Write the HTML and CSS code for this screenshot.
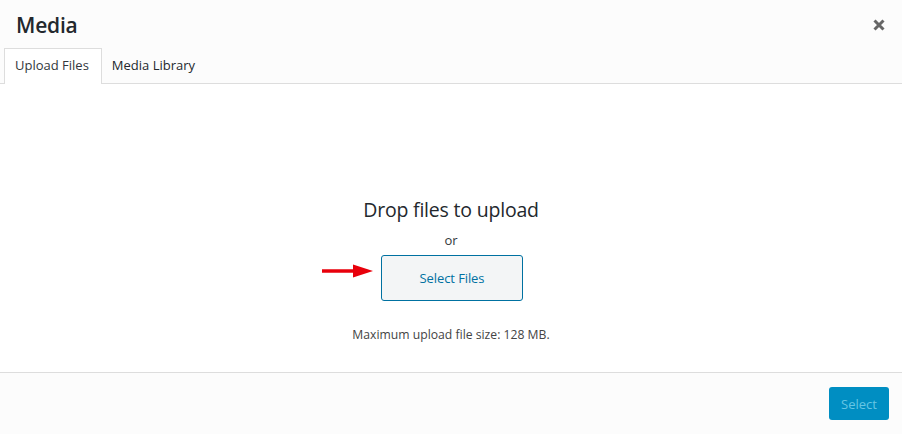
FILE: index.html
```html
<!DOCTYPE html>
<html>
<head>
<meta charset="utf-8">
<link rel="stylesheet" href="styles.css">
</head>
<body>
<div class="modal">
  <div class="header">
    <h1 class="title">Media</h1>
    <button class="close" aria-label="Close">
      <svg width="12" height="12" viewBox="0 0 12 12"><path d="M1.5 1.5 L10.5 10.5 M10.5 1.5 L1.5 10.5" stroke="#666" stroke-width="3" stroke-linecap="butt"/></svg>
    </button>
  </div>
  <div class="tabs">
    <div class="tab active">Upload Files</div>
    <div class="tab">Media Library</div>
  </div>
  <div class="content">
    <div class="drop">Drop files to upload</div>
    <div class="or">or</div>
    <div class="btn-wrap">
      <svg class="arrow" width="52" height="14" viewBox="0 0 52 14"><path d="M0 7 H32" stroke="#e8000b" stroke-width="3.5"/><path d="M31 0.5 L51 7 L31 13.5 Z" fill="#e8000b"/></svg>
      <button class="select-files">Select Files</button>
    </div>
    <div class="max">Maximum upload file size: 128 MB.</div>
  </div>
  <div class="footer">
    <button class="select">Select</button>
  </div>
</div>
</body>
</html>
```
FILE: styles.css
```css
* { box-sizing: border-box; }
html, body { margin: 0; padding: 0; }
body {
  width: 902px;
  height: 434px;
  overflow: hidden;
  font-family: "Open Sans", "Noto Sans", sans-serif;
  color: #23282d;
  background: #fff;
}
.modal { display: flex; flex-direction: column; height: 434px; }
.header {
  height: 48px;
  background: #fcfcfc;
  display: flex;
  justify-content: space-between;
  padding: 0 16px;
}
.title {
  margin: 0;
  font-size: 21px;
  font-weight: 600;
  line-height: 50px;
  color: #23282d;
  letter-spacing: -0.2px;
}
.close {
  border: 0;
  background: none;
  padding: 0;
  margin: 19px 1px 0 0;
  width: 12px;
  height: 12px;
  display: block;
}
.close svg { display: block; }
.tabs {
  background: #fcfcfc;
  display: flex;
  padding-left: 4px;
  border-bottom: 1px solid #ddd;
  height: 36px;
}
.tab {
  font-size: 13px;
  line-height: 33px;
  padding: 0 10px 0 9px;
  color: #23282d;
  border: 1px solid transparent;
  border-bottom: 0;
  height: 36px;
}
.tab.active {
  background: #fff;
  border-color: #ddd;
  color: #32373c;
  margin-bottom: -1px;
  height: 36px;
  padding: 0 12px 0 10px;
}
.content {
  flex: 1;
  display: flex;
  flex-direction: column;
  align-items: center;
  padding-top: 114px;
  background: #fff;
}
.drop {
  font-size: 19.5px;
  line-height: 24px;
  color: #23282d;
  letter-spacing: -0.2px;
}
.or {
  font-size: 13px;
  line-height: 20px;
  margin-top: 8px;
  color: #32373c;
}
.btn-wrap { position: relative; margin-top: 5px; margin-left: 2px; }
.arrow { position: absolute; left: -59px; top: 9px; }
.select-files {
  display: block;
  width: 142px;
  height: 46px;
  background: #f3f5f6;
  border: 1px solid #0071a1;
  border-radius: 3px;
  color: #0071a1;
  font-family: inherit;
  font-size: 13px;
  letter-spacing: -0.1px;
}
.max {
  margin-top: 24px;
  font-size: 12.2px;
  line-height: 20px;
  color: #444;
}
.footer {
  height: 62px;
  background: #fcfcfc;
  border-top: 1px solid #ddd;
  display: flex;
  justify-content: flex-end;
  padding: 14px 13px 0 0;
}
.select {
  width: 60px;
  height: 33px;
  background: #008ec2;
  border: 0;
  border-radius: 3px;
  color: #66c6e4;
  font-family: inherit;
  font-size: 13px;
}
```
